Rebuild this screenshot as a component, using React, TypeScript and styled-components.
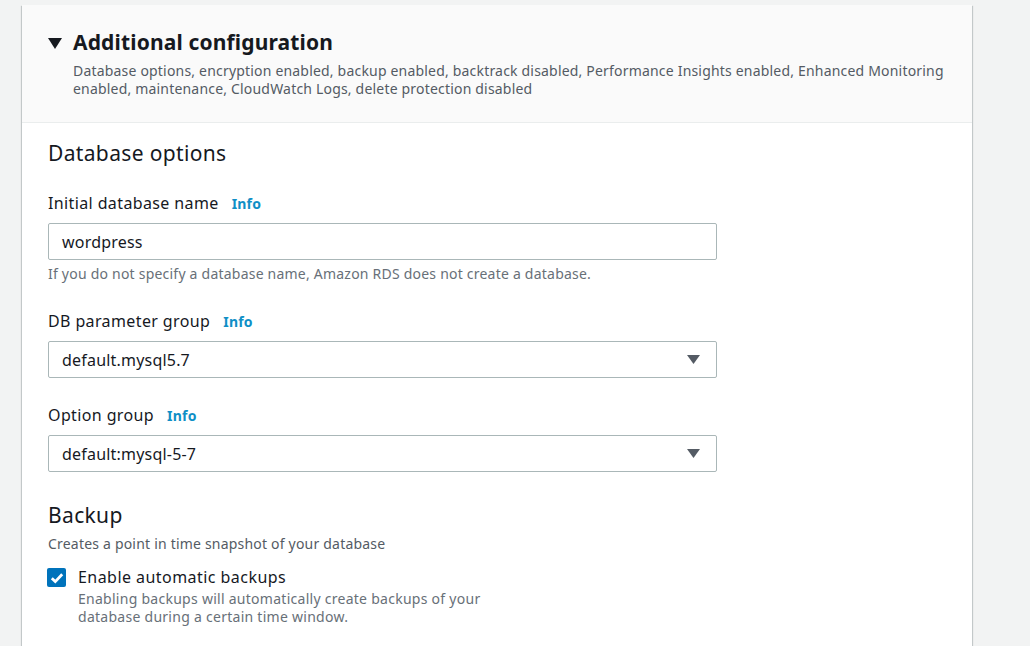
import React from "react";
import styled, { createGlobalStyle } from "styled-components";

const GlobalStyle = createGlobalStyle`
  html, body { margin: 0; padding: 0; background: #f2f3f3; }
  body { font-family: "Noto Sans", "Open Sans", sans-serif; color: #16191f; }
  * { box-sizing: border-box; }
`;

const Page = styled.div`
  padding: 5px 0 0 22px;
  width: 1030px;
  height: 646px;
  overflow: hidden;
`;

const Card = styled.section`
  width: 950px;
  background: #ffffff;
  box-shadow: 0 1px 1px 0 rgba(0, 28, 36, 0.3), 1px 1px 1px 0 rgba(0, 28, 36, 0.15),
    -1px 1px 1px 0 rgba(0, 28, 36, 0.15);
  min-height: 700px;
`;

const Header = styled.div`
  background: #fafafa;
  border-bottom: 1px solid #eaeded;
  padding: 23px 26px 24px 26px;
  display: flex;
  gap: 11px;
`;

const Caret = styled.svg`
  flex: none;
  margin-top: 10px;
`;

const HeaderText = styled.div`
  display: flex;
  flex-direction: column;
`;

const Title = styled.h2`
  margin: 0;
  font-size: 21px;
  font-weight: 700;
  line-height: 28px;
  letter-spacing: 0.15px;
`;

const Description = styled.p`
  margin: 6px 0 0;
  font-size: 14px;
  line-height: 18px;
  letter-spacing: 0.19px;
  color: #545b64;
`;

const Body = styled.div`
  padding: 15px 26px 20px;
  display: flex;
  flex-direction: column;
`;

const SectionTitle = styled.h3<{ $top?: number }>`
  margin: ${(p) => p.$top ?? 0}px 0 0;
  font-size: 21px;
  font-weight: 400;
  line-height: 30px;
  letter-spacing: 0.35px;
`;

const SectionDesc = styled.div`
  margin-top: 4px;
  font-size: 14px;
  line-height: 20px;
  letter-spacing: 0.2px;
  color: #545b64;
`;

const Field = styled.div<{ $top: number }>`
  margin-top: ${(p) => p.$top}px;
  display: flex;
  flex-direction: column;
`;

const LabelRow = styled.div`
  display: flex;
  align-items: baseline;
  gap: 13px;
  font-size: 16px;
  line-height: 22px;
  letter-spacing: 0.38px;
`;

const InfoLink = styled.a`
  font-size: 14px;
  font-weight: 700;
  letter-spacing: 0.2px;
  color: #0f8fc6;
  text-decoration: none;
`;

const InputBox = styled.div`
  margin-top: 8px;
  width: 669px;
  height: 37px;
  border: 1px solid #aab7b8;
  border-radius: 2px;
  background: #fff;
  display: flex;
  align-items: center;
  justify-content: space-between;
  padding: 0 16px 0 13px;
  font-size: 16px;
  letter-spacing: 0.2px;
  color: #16191f;
`;

const Hint = styled.div`
  margin-top: 5px;
  font-size: 14px;
  line-height: 18px;
  letter-spacing: 0.22px;
  color: #687078;
`;

const CheckRow = styled.div`
  margin-top: 12px;
  display: flex;
  gap: 12px;
`;

const Box = styled.div`
  flex: none;
  width: 19px;
  height: 19px;
  margin: 2px 0 0 -1px;
  border-radius: 2px;
  background: #0073bb;
  display: flex;
  align-items: center;
  justify-content: center;
`;

const CheckText = styled.div`
  display: flex;
  flex-direction: column;
`;

const CheckLabel = styled.div`
  font-size: 16px;
  line-height: 22px;
  letter-spacing: 0.45px;
`;

const CheckDesc = styled.div`
  margin-top: 2px;
  font-size: 14px;
  line-height: 18px;
  letter-spacing: 0.27px;
  color: #687078;
  width: 420px;
`;

const Arrow = () => (
  <svg width="13" height="9" viewBox="0 0 13 9">
    <path d="M0 0 H13 L6.5 9 Z" fill="#545b64" />
  </svg>
);

export default function App() {
  return (
    <>
      <GlobalStyle />
      <Page>
        <Card>
          <Header>
            <Caret width="14" height="11" viewBox="0 0 14 11">
              <path d="M0 0 H14 L7 11 Z" fill="#16191f" />
            </Caret>
            <HeaderText>
              <Title>Additional configuration</Title>
              <Description>
                Database options, encryption enabled, backup enabled, backtrack disabled, Performance Insights enabled,
                Enhanced Monitoring enabled, maintenance, CloudWatch Logs, delete protection disabled
              </Description>
            </HeaderText>
          </Header>
          <Body>
            <SectionTitle>Database options</SectionTitle>
            <Field $top={24}>
              <LabelRow>
                Initial database name <InfoLink>Info</InfoLink>
              </LabelRow>
              <InputBox>wordpress</InputBox>
              <Hint>If you do not specify a database name, Amazon RDS does not create a database.</Hint>
            </Field>
            <Field $top={27}>
              <LabelRow>
                DB parameter group <InfoLink>Info</InfoLink>
              </LabelRow>
              <InputBox>
                default.mysql5.7
                <Arrow />
              </InputBox>
            </Field>
            <Field $top={26}>
              <LabelRow>
                Option group <InfoLink>Info</InfoLink>
              </LabelRow>
              <InputBox>
                default:mysql-5-7
                <Arrow />
              </InputBox>
            </Field>
            <SectionTitle $top={28}>Backup</SectionTitle>
            <SectionDesc>Creates a point in time snapshot of your database</SectionDesc>
            <CheckRow>
              <Box>
                <svg width="14" height="12" viewBox="0 0 14 12">
                  <path d="M1.8 6.2 L5.3 9.6 L12.2 2.2" stroke="#fff" strokeWidth="2.8" fill="none" />
                </svg>
              </Box>
              <CheckText>
                <CheckLabel>Enable automatic backups</CheckLabel>
                <CheckDesc>
                  Enabling backups will automatically create backups of your database during a certain time window.
                </CheckDesc>
              </CheckText>
            </CheckRow>
          </Body>
        </Card>
      </Page>
    </>
  );
}
